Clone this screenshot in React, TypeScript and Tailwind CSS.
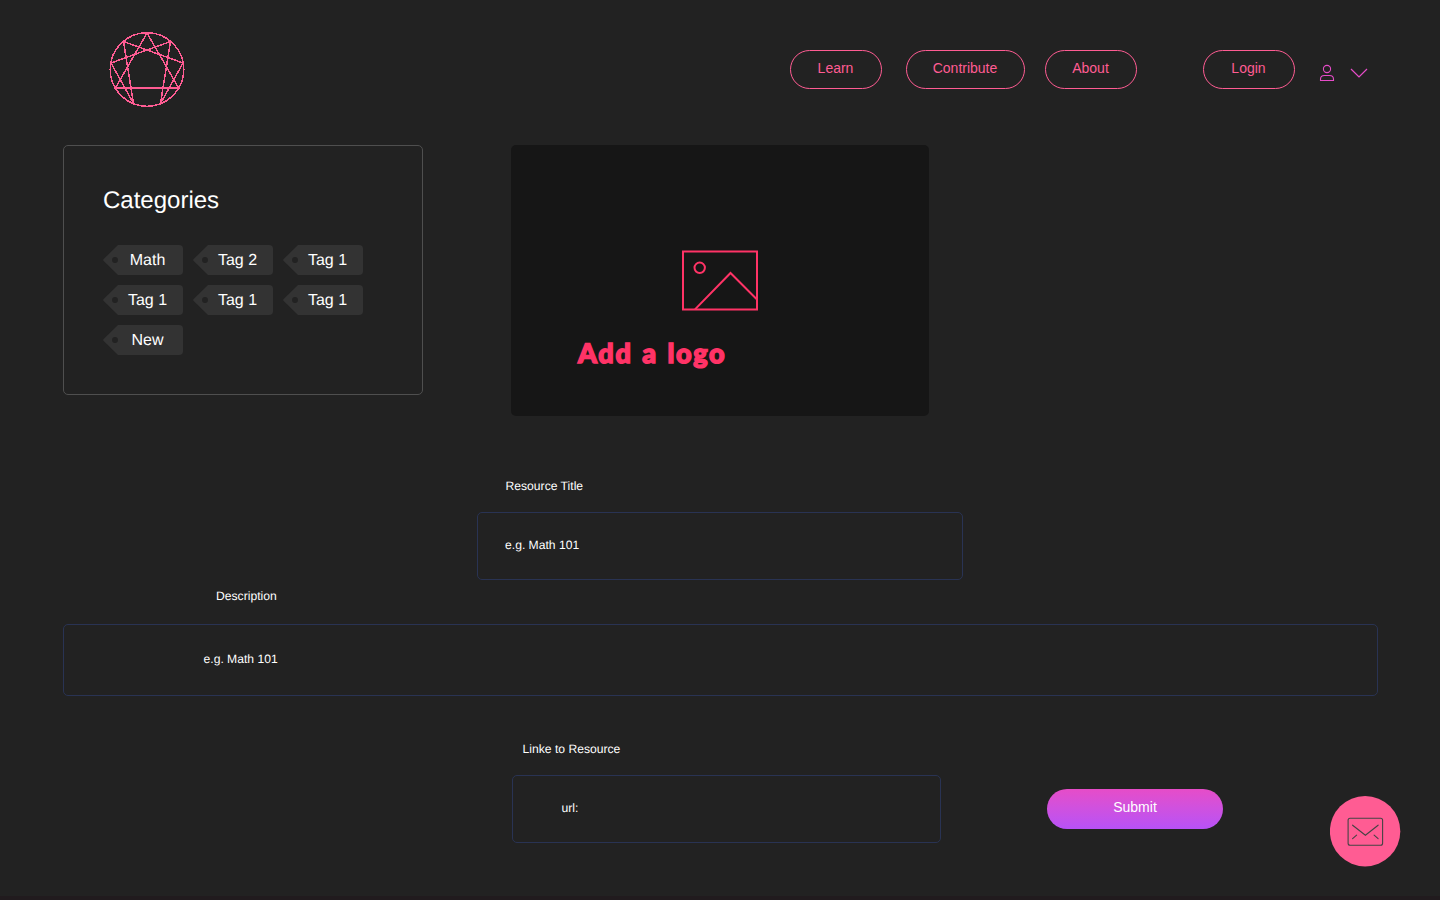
const PINK_BUTTON =
  'flex h-[39px] items-center justify-center rounded-full border border-[#ff5c93] pr-px pb-[3px] text-[14px] leading-5 text-[#ff5c93]';

function Logo() {
  return (
    <svg className="mt-[31px] ml-[109px] h-[77px] w-[76px]" viewBox="109 31 76 77" fill="none" stroke="#ff5c93" strokeWidth="1.5" shapeRendering="crispEdges">
      <circle cx="147" cy="69.5" r="36.8" />
      <path d="M147 33L178.6 88H115.4Z" />
      <path d="M170.5 41.5L160.5 103.5L183 63L123.5 41.5L133.5 103.5L111 63Z" />
      <path d="M115 88H179" strokeWidth="1.8" />
    </svg>
  );
}

function Header() {
  return (
    <header className="flex h-[145px] items-start">
      <Logo />
      <nav className="mt-[50px] ml-[605px] flex">
        <button className={`${PINK_BUTTON} w-[92px]`}>Learn</button>
        <button className={`${PINK_BUTTON} ml-6 w-[119px]`}>Contribute</button>
        <button className={`${PINK_BUTTON} ml-5 w-[92px]`}>About</button>
        <button className={`${PINK_BUTTON} ml-[66px] w-[92px]`}>Login</button>
      </nav>
      <svg className="mt-[64px] ml-[24px] h-[18px] w-4" viewBox="0 0 16 18" fill="none" stroke="#e64cc8" strokeWidth="1.1">
        <circle cx="8" cy="5" r="3.6" />
        <path d="M1.5 16.5V15.3C1.5 12.9 3.3 11.5 5.5 11.5H10.5C12.7 11.5 14.5 12.9 14.5 15.3V16.5Z" />
      </svg>
      <svg className="mt-[67px] ml-[15px] h-3 w-[18px]" viewBox="0 0 18 12" fill="none" stroke="#e64cc8" strokeWidth="1.2">
        <path d="M1 2L9 10L17 2" />
      </svg>
    </header>
  );
}

function Tag({ label }: { label: string }) {
  return (
    <div className="grid h-[30px] w-20 grid-cols-1 grid-rows-1">
      <svg className="col-start-1 row-start-1 h-[30px] w-20" viewBox="0 0 80 30">
        <path d="M15 0H76Q80 0 80 4V26Q80 30 76 30H15L0.7 16Q-0.3 15 0.7 14Z" fill="#333333" />
        <circle cx="12" cy="15" r="3" fill="#222222" />
      </svg>
      <span className="col-start-1 row-start-1 pt-px pl-[9px] text-center text-[16px] leading-[30px] text-white">{label}</span>
    </div>
  );
}

const TAGS = ['Math', 'Tag 2', 'Tag 1', 'Tag 1', 'Tag 1', 'Tag 1', 'New'];

function Categories() {
  return (
    <section className="h-[250px] w-[360px] rounded-[5px] border border-[#4f4f4f] px-[39px] pt-[39px]">
      <h2 className="text-[24px] leading-8 text-white">Categories</h2>
      <div className="mt-[28px] grid auto-rows-[30px] grid-cols-[80px_80px_80px] gap-[10px]">
        {TAGS.map((tag, i) => (
          <Tag key={i} label={tag} />
        ))}
      </div>
    </section>
  );
}

function LogoUpload() {
  return (
    <section className="ml-[88px] h-[271px] w-[418px] rounded-[5px] bg-[#161616] pt-[105px]">
      <svg className="ml-[171px] h-[61px] w-[76px]" viewBox="0 0 76 61" fill="none" stroke="#ff3366" strokeWidth="2">
        <path d="M1 1.4H75V59.6H1Z" />
        <circle cx="17.7" cy="17.8" r="5.2" />
        <path d="M13 59.4L48.5 23L75 49.5" />
      </svg>
      <p className="mt-[24px] ml-[67px] text-[27px] leading-9 font-black tracking-[1.7px] whitespace-nowrap text-[#ff3366] [-webkit-text-stroke:1.5px_#ff3366] [word-spacing:1.6px] font-['Lato']">Add a logo</p>
    </section>
  );
}

function Mail() {
  return (
    <button aria-label="Mail" className="mt-[28px] ml-[106.5px] h-[71px] w-[71px]">
      <svg className="h-[71px] w-[71px]" viewBox="0.4 0.3 71 71" fill="none" stroke="#444444" strokeWidth="1.1" strokeLinecap="round">
        <circle cx="35.5" cy="35.5" r="35.2" fill="#ff5c93" stroke="none" />
        <rect x="18.5" y="22.5" width="34.5" height="27" rx="2" />
        <path d="M23 29.5L35.8 39.5L48.5 29.5M23 43L27 39.5M48.5 43L44.5 39.5" />
      </svg>
    </button>
  );
}

const FIELD = 'rounded-[5px] border border-[#293353]';
const SMALL = 'text-[12.15px] leading-4 text-white';

export default function App() {
  return (
    <main className="flex h-[900px] w-[1440px] flex-col overflow-hidden bg-[#222222] font-['Liberation_Sans',Arial,sans-serif] [text-rendering:geometricPrecision]">
      <Header />
      <div className="flex h-[333px] items-start pl-[63px]">
        <Categories />
        <LogoUpload />
      </div>
      <div className="h-[110px] pl-[477px]">
        <p className={`${SMALL} pl-[28.5px]`}>Resource Title</p>
        <div className={`${FIELD} mt-[18px] h-[68px] w-[486px] pt-6 pl-[27px]`}>
          <p className={SMALL}>e.g. Math 101</p>
        </div>
      </div>
      <div className="h-[153px] pl-[63px]">
        <p className={`${SMALL} pl-[153px]`}>Description</p>
        <div className={`${FIELD} mt-5 h-[72px] w-[1315px] pt-[26px] pl-[139.5px]`}>
          <p className={SMALL}>e.g. Math 101</p>
        </div>
      </div>
      <div className="flex h-[155px] items-start pl-[512px]">
        <div>
          <p className={`${SMALL} pl-[10.5px]`}>Linke to Resource</p>
          <div className={`${FIELD} mt-[18px] h-[68px] w-[429px] pt-6 pl-[48.5px]`}>
            <p className={SMALL}>url:</p>
          </div>
        </div>
        <button className="mt-[48px] ml-[106px] h-10 w-44 rounded-full bg-linear-to-b from-[#e64cc8] to-[#b751f7] pb-1 text-[14px] leading-5 text-white">Submit</button>
        <div className="pt-[27px]">
          <Mail />
        </div>
      </div>
      <div className="h-1 shrink-0 bg-[#211b1e]" />
    </main>
  );
}
